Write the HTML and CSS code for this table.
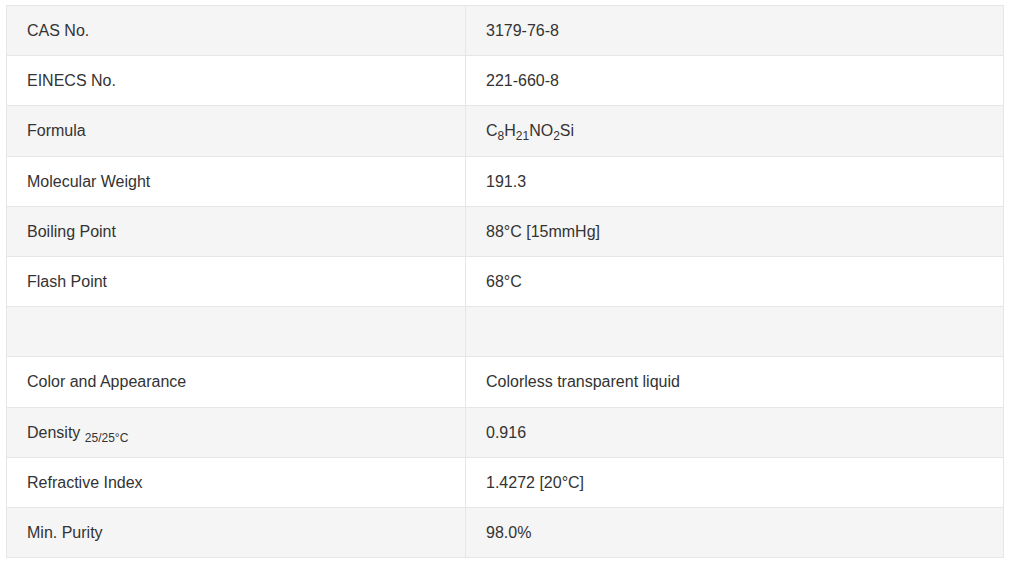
FILE: index.html
```html
<!DOCTYPE html>
<html>
<head>
<meta charset="utf-8">
<link rel="stylesheet" href="styles.css">
</head>
<body>
<div class="wrap">
<table class="spec">
<tbody>
<tr><td class="k">CAS No.</td><td>3179-76-8</td></tr>
<tr><td class="k">EINECS No.</td><td>221-660-8</td></tr>
<tr><td class="k">Formula</td><td>C<sub>8</sub>H<sub>21</sub>NO<sub>2</sub>Si</td></tr>
<tr><td class="k">Molecular Weight</td><td>191.3</td></tr>
<tr><td class="k">Boiling Point</td><td>88°C [15mmHg]</td></tr>
<tr><td class="k">Flash Point</td><td>68°C</td></tr>
<tr><td class="k">&nbsp;</td><td>&nbsp;</td></tr>
<tr><td class="k">Color and Appearance</td><td>Colorless transparent liquid</td></tr>
<tr><td class="k">Density <sub class="small">25/25°C</sub></td><td>0.916</td></tr>
<tr><td class="k">Refractive Index</td><td>1.4272 [20°C]</td></tr>
<tr><td class="k">Min. Purity</td><td>98.0%</td></tr>
</tbody>
</table>
</div>
</body>
</html>
```

FILE: styles.css
```css
html, body {
  margin: 0;
  padding: 0;
  background: #fff;
}
.wrap {
  padding: 5px 6px 0 6px;
}
.spec {
  width: 998px;
  border-collapse: collapse;
  font-family: "Liberation Sans", Arial, sans-serif;
  font-size: 16px;
  color: #333;
}
.spec td {
  border: 1px solid #e6e6e6;
  padding: 15px 20px;
  line-height: 19.18px;
  height: 19.18px;
  vertical-align: middle;
  text-align: left;
}
.spec td.k {
  width: 418px;
}
.spec tr:nth-child(odd) td {
  background: #f5f5f5;
}
.spec sub {
  font-size: 12px;
  line-height: 0;
  vertical-align: -4px;
}
.spec sub.small {
  font-size: 12px;
}
```
